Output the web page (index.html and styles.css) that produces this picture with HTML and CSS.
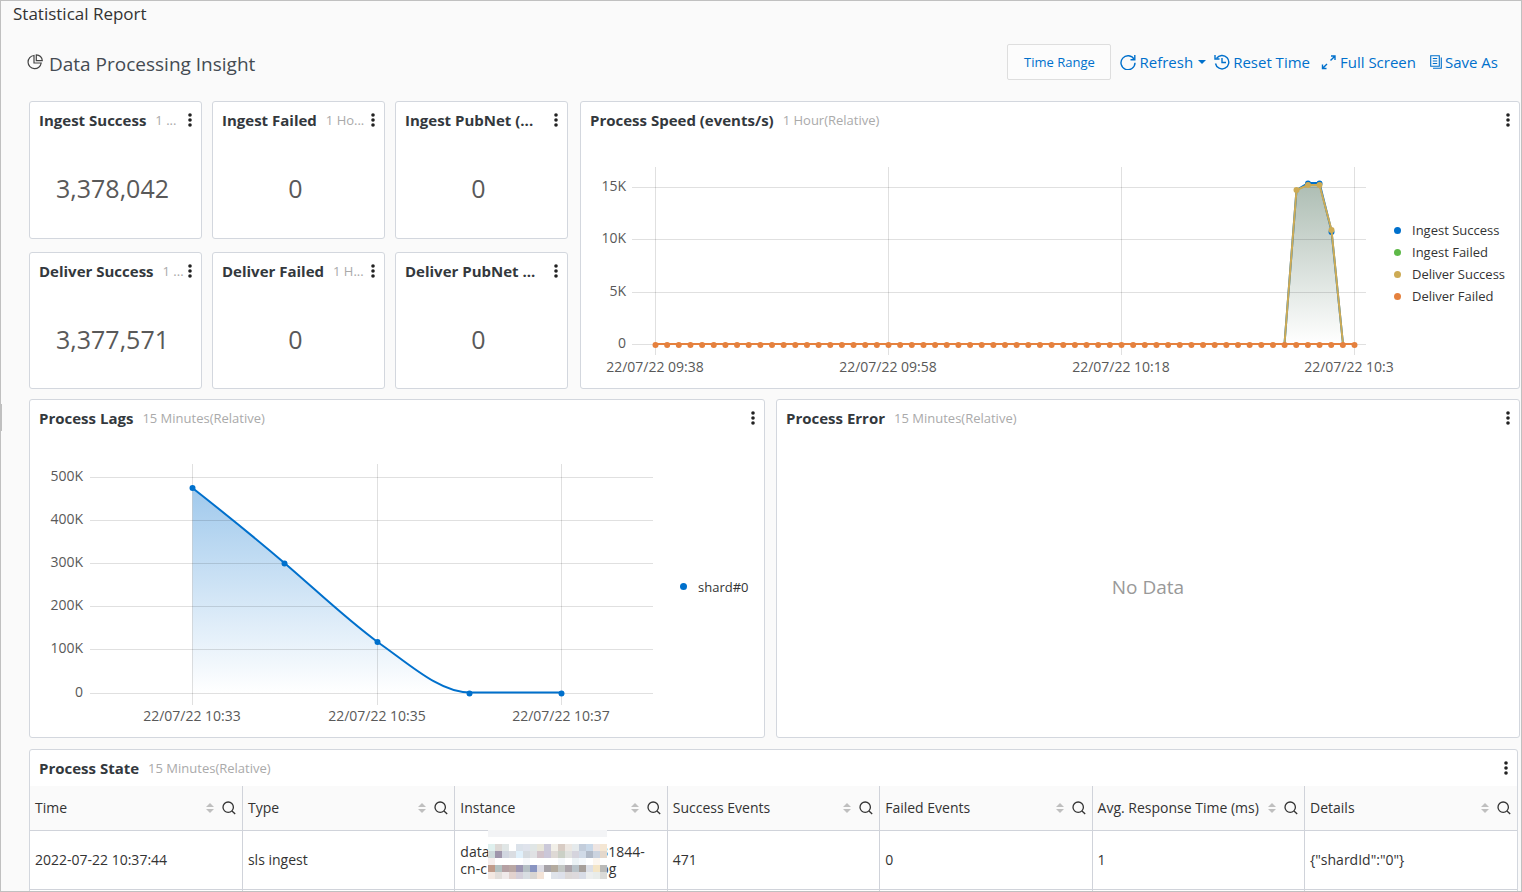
FILE: index.html
```html
<!DOCTYPE html>
<html lang="en">
<head>
<meta charset="utf-8">
<title>Statistical Report</title>
<link rel="stylesheet" href="styles.css">
</head>
<body>
<svg class="defs" aria-hidden="true">
  <symbol id="dots" viewBox="0 0 4 14"><circle cx="2" cy="2" r="1.8"/><circle cx="2" cy="7" r="1.8"/><circle cx="2" cy="12" r="1.8"/></symbol>
  <symbol id="sort" viewBox="0 0 8 12"><path d="M0 5 4 1l4 4zM0 7h8l-4 4z"/></symbol>
  <symbol id="search" viewBox="0 0 14 14"><circle cx="6.2" cy="6.2" r="5.2"/><path d="M10 10l3.2 3"/></symbol>
</svg>
<div class="app">
  <h1 class="page-title">Statistical Report</h1>
  <button class="side-handle" aria-label="Expand sidebar"></button>
  <main class="main">
    <header class="toolbar">
      <svg class="pie" viewBox="0 0 16 16"><path d="M7 1.5A6.6 6.6 0 1 0 14.2 9H7z"/><path d="M9.3.8v5.9h6A6 6 0 0 0 9.3.8z"/></svg>
      <h2 class="report-title">Data Processing Insight</h2>
      <button class="range">Time Range</button>
      <button class="action refresh"><svg class="ico" viewBox="0 0 16 16"><path d="M14.2 5.5A7 7 0 1 0 15 8.800"/><path d="M14.800 1v4.800H10.500"/></svg>Refresh<svg class="caret" viewBox="0 0 8 4"><path d="M0 0h8L4 4z"/></svg></button>
      <button class="action reset"><svg class="ico" viewBox="0 0 16 16"><path d="M2.500 4.500A6.700 6.700 0 1 1 1.500 9.500"/><path d="M1 1v4h4.500M8 4v4.500h4"/></svg>Reset Time</button>
      <button class="action full"><svg class="ico" viewBox="0 0 16 16"><path d="M9.500 6.500l4.300-4.300M10 2h4v4M6 10l-4.300 4.300M1.500 10.500v4h4"/></svg>Full Screen</button>
      <button class="action"><svg class="ico copy" viewBox="0 0 12 14"><path d="M.7.700h8.600v10.600H.700zM11.300 2.500v10.800H3M2.800 3.500h4.400M2.800 6h4.400M2.800 8.500h4.400"/></svg>Save As</button>
    </header>

    <div class="row row-top">
      <div class="stats">
        <section class="card"><div class="card-head"><h3>Ingest Success</h3><span class="when">1 ...</span><button class="more" aria-label="More"><svg><use href="#dots"/></svg></button></div><p class="num">3,378,042</p></section>
        <section class="card"><div class="card-head"><h3>Ingest Failed</h3><span class="when">1 Ho...</span><button class="more" aria-label="More"><svg><use href="#dots"/></svg></button></div><p class="num">0</p></section>
        <section class="card"><div class="card-head"><h3>Ingest PubNet (...</h3><button class="more" aria-label="More"><svg><use href="#dots"/></svg></button></div><p class="num">0</p></section>
        <section class="card"><div class="card-head"><h3>Deliver Success</h3><span class="when">1 ...</span><button class="more" aria-label="More"><svg><use href="#dots"/></svg></button></div><p class="num">3,377,571</p></section>
        <section class="card"><div class="card-head"><h3>Deliver Failed</h3><span class="when">1 H...</span><button class="more" aria-label="More"><svg><use href="#dots"/></svg></button></div><p class="num">0</p></section>
        <section class="card"><div class="card-head"><h3>Deliver PubNet ...</h3><button class="more" aria-label="More"><svg><use href="#dots"/></svg></button></div><p class="num">0</p></section>
      </div>
      <section class="card">
        <div class="card-head"><h3>Process Speed (events/s)</h3><span class="when">1 Hour(Relative)</span><button class="more" aria-label="More"><svg><use href="#dots"/></svg></button></div>
        <div class="chart-body">
          <svg class="chart speed" viewBox="0 0 804 250">
            <defs><linearGradient id="g1" x1="0" y1="0" x2="0" y2="1"><stop offset="0" stop-color="#adbdb3"/><stop offset="1" stop-color="#fff"/></linearGradient></defs>
            <path fill="url(#g1)" d="M694.500 206 706.500 52 718 45H729.500L741.500 93 753 206z"/>
            <path class="grid" d="M42 49.500H776M42 101.500H776M42 154.500H776M42 206.500H776M65.500 29V217M298.500 29V217M531.500 29V217M764.500 29V217"/>
            <path class="line blue" d="M694.500 206 706.500 52 718 45H729.500L741.500 93 753 206"/>
            <path class="pts blue" d="M718 45.500h.01M729.500 45.500h.01M741.500 94h.01"/>
            <path class="line gold" d="M65.500 206H694.500L706.500 52 718 47H729.500L741.500 92 753 206H764.500"/>
            <path class="pts gold" d="M706.500 52h.01M718 47h.01M729.500 47h.01M741.500 92h.01"/>
            <path class="line orange" d="M65.500 206H764.500"/>
            <path class="pts orange" pathLength="60" stroke-dasharray="0 1" d="M65.500 207H764.500"/>
            <g class="yl"><text x="36" y="53">15K</text><text x="36" y="105">10K</text><text x="36" y="158">5K</text><text x="36" y="210">0</text></g>
            <g class="xl"><text x="65" y="234">22/07/22 09:38</text><text x="298" y="234">22/07/22 09:58</text><text x="531" y="234">22/07/22 10:18</text><text x="763" y="234">22/07/22 10:38</text></g>
          </svg>
          <ul class="legend legend-speed"><li class="c-blue">Ingest Success</li><li class="c-green">Ingest Failed</li><li class="c-gold">Deliver Success</li><li class="c-orange">Deliver Failed</li></ul>
        </div>
      </section>
    </div>

    <div class="row row-mid">
      <section class="card">
        <div class="card-head"><h3>Process Lags</h3><span class="when">15 Minutes(Relative)</span><button class="more" aria-label="More"><svg><use href="#dots"/></svg></button></div>
        <div class="chart-body">
          <svg class="chart lags" viewBox="0 -1 626 301">
            <defs><linearGradient id="g2" x1="0" y1="0" x2="0" y2="1"><stop offset="0" stop-color="#a0c9ec"/><stop offset="1" stop-color="#fff"/></linearGradient></defs>
            <path fill="url(#g2)" d="M153.500 51C184 75 215 100 246 126.500S306 181 338.500 205C369 226 400 256 430.500 256H153.500z"/>
            <path class="grid" d="M51 40.500H614M51 83.500H614M51 126.500H614M51 169.500H614M51 212.500H614M51 256.500H614M153.500 27V268M338.500 27V268M522.500 27V268"/>
            <path class="line blue" d="M153.500 51C184 75 215 100 246 126.500S306 181 338.500 205C369 226 400 255.500 430.500 255.500H522.500"/>
            <path class="pts blue" d="M153.500 51h.01M245.500 126.500h.01M338.500 205h.01M430.500 256.500h.01M522.500 256.500h.01"/>
            <g class="yl"><text x="44" y="44">500K</text><text x="44" y="87">400K</text><text x="44" y="130">300K</text><text x="44" y="173">200K</text><text x="44" y="216">100K</text><text x="44" y="260">0</text></g>
            <g class="xl"><text x="153" y="284">22/07/22 10:33</text><text x="338" y="284">22/07/22 10:35</text><text x="522" y="284">22/07/22 10:37</text></g>
          </svg>
          <ul class="legend legend-lags"><li class="c-blue">shard#0</li></ul>
        </div>
      </section>
      <section class="card">
        <div class="card-head"><h3>Process Error</h3><span class="when">15 Minutes(Relative)</span><button class="more" aria-label="More"><svg><use href="#dots"/></svg></button></div>
        <p class="empty">No Data</p>
      </section>
    </div>

    <section class="card state">
      <div class="card-head"><h3>Process State</h3><span class="when">15 Minutes(Relative)</span><button class="more" aria-label="More"><svg><use href="#dots"/></svg></button></div>
      <table>
        <thead><tr>
          <th><div class="th">Time<svg class="sort"><use href="#sort"/></svg><svg class="find"><use href="#search"/></svg></div></th>
          <th><div class="th">Type<svg class="sort"><use href="#sort"/></svg><svg class="find"><use href="#search"/></svg></div></th>
          <th><div class="th">Instance<svg class="sort"><use href="#sort"/></svg><svg class="find"><use href="#search"/></svg></div></th>
          <th><div class="th">Success Events<svg class="sort"><use href="#sort"/></svg><svg class="find"><use href="#search"/></svg></div></th>
          <th><div class="th">Failed Events<svg class="sort"><use href="#sort"/></svg><svg class="find"><use href="#search"/></svg></div></th>
          <th><div class="th">Avg. Response Time (ms)<svg class="sort"><use href="#sort"/></svg><svg class="find"><use href="#search"/></svg></div></th>
          <th><div class="th">Details<svg class="sort"><use href="#sort"/></svg><svg class="find"><use href="#search"/></svg></div></th>
        </tr></thead>
        <tbody>
          <tr><td>2022-07-22 10:37:44</td><td>sls ingest</td>
            <td class="masked"><span class="part">data</span><span>31844-</span><br><span class="part">cn-c</span><span class="tail">og</span>
              <svg class="mosaic" viewBox="0 0 17 7" preserveAspectRatio="none" shape-rendering="crispEdges"></svg></td>
            <td>471</td><td>0</td><td>1</td><td>{"shardId":"0"}</td></tr>
          <tr><td></td><td></td><td></td><td></td><td></td><td></td><td></td></tr>
        </tbody>
      </table>
    </section>
  </main>
</div>
<script src="mosaic.js"></script>
</body>
</html>
```
FILE: styles.css
```css
* { box-sizing: border-box; }
body { margin: 0; font-family: "Open Sans", "Noto Sans", sans-serif; font-size: 14px; color: #333; }
h1, h2, h3, p, ul { margin: 0; padding: 0; font-weight: 400; }
button { font-family: inherit; border: 0; background: none; padding: 0; color: inherit; cursor: pointer; }
.defs { display: none; }

.app { position: relative; height: 100vh; overflow: hidden; border: 1px solid #c0c0c0; background: #fafafa; }
.page-title { padding-left: 12px; font-size: 17px; line-height: 26px; }
.side-handle { position: absolute; left: 0; top: 403px; width: 1px; height: 27px; background: #c0c0c0; }
.main { padding: 0 1px 0 28px; }

.toolbar { display: flex; align-items: center; height: 74px; padding: 0 22px 4px 0; }
.pie { width: 16px; height: 16px; margin: 0 6px 0 -2px; fill: none; stroke: #444; stroke-width: 1.2; }
.report-title { flex: 1; padding-top: 3px; font-size: 19px; line-height: 28px; color: #444b52; }
.range { width: 104px; height: 36px; margin-right: 9px; border: 1px solid #dedede; border-radius: 2px; background: #fcfcfc; color: #0070cc; font-size: 13px; }
.action { display: flex; align-items: center; gap: 3px; margin-right: 14px; color: #0070cc; font-size: 15px; }
.action:last-child { margin-right: 0; }
.refresh { margin-right: 8px; }
.reset { margin-right: 11px; }
.ico { width: 16px; height: 16px; fill: none; stroke: #0070cc; stroke-width: 1.4; }
.copy { width: 12px; height: 14px; stroke-width: 1.1; }
.caret { width: 8px; height: 4px; margin-left: 2px; fill: #0070cc; }

.row { display: grid; }
.row-top { grid-template-columns: 539fr 940fr; gap: 12px; margin-bottom: 10px; }
.row-mid { grid-template-columns: 736fr 744fr; gap: 11px; margin-bottom: 11px; }
.stats { display: grid; grid-template-columns: repeat(3, 1fr); gap: 13px 10px; }
.card { display: flex; flex-direction: column; min-width: 0; border: 1px solid #d3d7de; border-radius: 3px; background: #fff; }
.card-head { display: flex; align-items: center; height: 36px; padding: 0 9px; white-space: nowrap; }
.card-head h3 { font-size: 15px; line-height: 34px; font-weight: 700; color: #33383d; }
.when { margin-left: 9px; font-size: 13px; color: #aaa; }
.more { display: flex; margin-left: auto; }
.more svg { width: 4px; height: 14px; fill: #222; }
.num { flex: 1; padding: 32px 6px 0 0; text-align: center; font-size: 25px; line-height: 36px; color: #595959; }
.empty { display: flex; flex: 1; align-items: center; justify-content: center; font-size: 19px; color: #999; }

.chart-body { display: flex; padding-left: 9px; }
.chart { flex: 1; min-width: 0; overflow: hidden; }
.speed { height: 250px; }
.lags { height: 301px; }
.chart text { font-size: 14px; fill: #595959; }
.yl { text-anchor: end; }
.xl { text-anchor: middle; }
.grid { stroke: #000; stroke-opacity: .12; fill: none; }
.line { fill: none; stroke-width: 2; stroke-linejoin: round; }
.pts { fill: none; stroke-width: 6; stroke-linecap: round; }
.blue { stroke: #0070cc; }
.gold { stroke: #cdab55; }
.orange { stroke: #e5813e; }
.legend { display: flex; flex-direction: column; justify-content: center; list-style: none; }
.legend-speed { width: 125px; }
.legend-lags { width: 99px; padding-left: 15px; }
.legend li { display: flex; align-items: center; gap: 11px; line-height: 22px; font-size: 13px; white-space: nowrap; }
.legend li::before { content: ""; width: 7px; height: 7px; border-radius: 50%; background: currentColor; }
.c-blue::before { color: #0070cc; }
.c-green::before { color: #5eb948; }
.c-gold::before { color: #cdab55; }
.c-orange::before { color: #e5813e; }

.state { margin-right: 2px; }
table { width: 100%; table-layout: fixed; border-collapse: collapse; }
th, td { padding: 0 6px 0 5px; border: 1px solid #d0d3da; text-align: left; font-weight: 400; }
th:first-child, td:first-child { border-left: 0; }
th:last-child, td:last-child { border-right: 0; }
th { height: 44px; border-top: 0; background: #fafafa; }
td { height: 59px; line-height: 17px; background: #fff; }
.th { display: flex; align-items: center; line-height: 18px; white-space: nowrap; }
.sort { width: 8px; height: 12px; margin-left: auto; fill: #bfbfbf; }
.find { width: 14px; height: 14px; margin-left: 8px; fill: none; stroke: #333; stroke-width: 1.3; }
.masked { position: relative; }
.part { display: inline-block; width: 140px; }
.mosaic { position: absolute; left: 33px; top: -1px; width: 119px; height: 49px; }
```
FILE: mosaic.js
```js
var rows = [
  ["#f3f4f6","#f3f4f6","#f3f4f6","#f3f4f6","#f3f4f6","#f3f4f6","#f3f4f6","#f3f4f6","#f3f4f6","#f3f4f6","#f3f4f6","#f3f4f6","#f3f4f6","#f3f4f6","#f3f4f6","#f3f4f6","#f3f4f6"],
  [],
  ["#dff0ee","#ddd9d6","#e0e6e6","#fff","#dbe2ea","#dfe3ec","#e0e6e6","#e8e6da","#cbc9d9","#f1efe8","#d8ccc4","#ece7e2","#e5eaec","#c3cddb","#c9d8e8","#eee5e2","#f4e6d3"],
  ["#cddadb","#9f96ab","#d1d6e0","#dadde2","#e0f0fb","#d6dbe0","#e0e1e4","#d2c3ca","#cbc7d9","#ded9d5","#cbd0c6","#e0e1df","#d5d4dd","#d0dae7","#b1bac8","#cbd3df","#e4d8cc"],
  ["#f6eeec","#fff","#fff","#fff","#fff","#f6f8fb","#fff","#fff","#fff","#fff","#f5f8fb","#fff","#ebf2f5","#f5f8fb","#fff","#fcf6ef","#fff"],
  ["#c09b8a","#b3c1c1","#b5a0a3","#b9a7a4","#9c96b2","#b5bfc4","#8994c1","#dddce4","#a7a3a8","#b4ab9f","#c2c6c4","#aba4aa","#b8c2c8","#a69f9a","#dcdfe6","#f4e5c6","#babab8"],
  ["#f3e8e2","#e2dedb","#f0eaea","#e2d2ce","#d4cfda","#d8dde2","#d9d5d2","#f3e3d7","#fff","#dfe3ea","#dde0ea","#dcd8d8","#ddd9dc","#d8dce6","#eceeee","#e8ecea","#dadad8"]
];
var mosaic = document.querySelector(".mosaic");
rows.forEach(function (row, y) {
  for (var x = 0; x < 17; x++) {
    var cell = document.createElementNS("http://www.w3.org/2000/svg", "rect");
    cell.setAttribute("x", x);
    cell.setAttribute("y", y);
    cell.setAttribute("width", 1);
    cell.setAttribute("height", 1);
    cell.setAttribute("fill", row[x] || "#fff");
    mosaic.appendChild(cell);
  }
});
```
